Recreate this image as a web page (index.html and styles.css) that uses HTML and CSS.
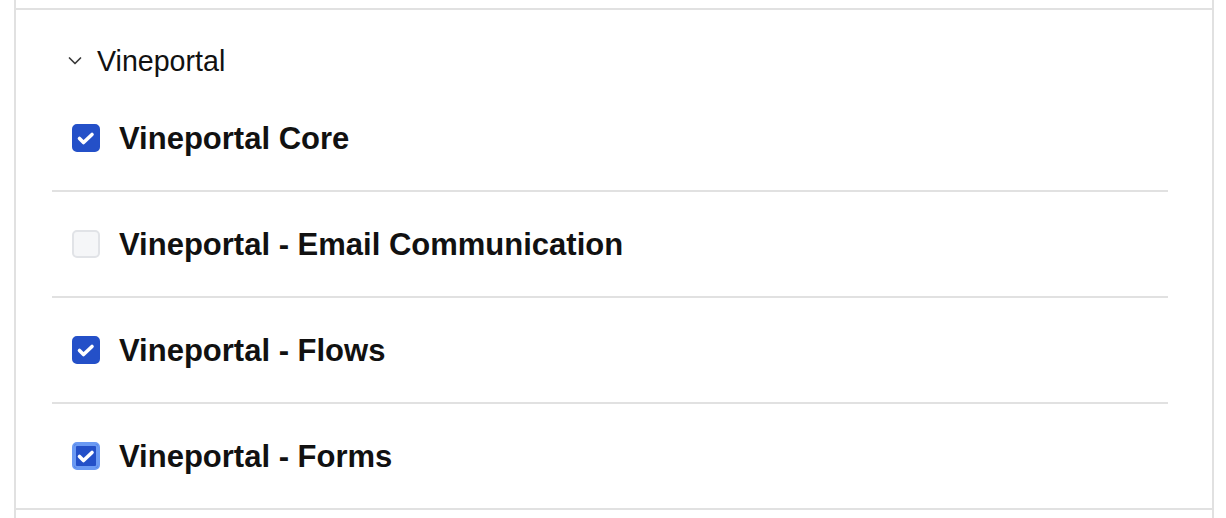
FILE: index.html
```html
<!DOCTYPE html>
<html lang="en">
<head>
    <meta charset="UTF-8">
    <meta name="viewport" content="width=device-width, initial-scale=1.0">
    <title>Modules</title>
    <link rel="stylesheet" href="styles.css">
</head>
<body>
    <div class="panel">
        <div class="section section-prev"></div>

        <!-- Vineportal group -->
        <div class="section">
            <div class="group-header">
                <svg class="chevron" width="14" height="10" viewBox="0 0 14 10">
                    <polyline points="1.5,2 7,7.5 12.5,2" fill="none" stroke="#3a3a3a" stroke-width="1.7" stroke-linecap="round" stroke-linejoin="round"/>
                </svg>
                <span>Vineportal</span>
            </div>
            <ul class="module-list">
                <li class="module">
                    <span class="checkbox checked">
                        <svg viewBox="0 0 28 28"><polyline points="7.5,14.5 11.5,18.5 20,10.5" fill="none" stroke="#fff" stroke-width="3.6" stroke-linecap="round" stroke-linejoin="round"/></svg>
                    </span>
                    <span class="module-name">Vineportal Core</span>
                </li>
                <li class="module">
                    <span class="checkbox"></span>
                    <span class="module-name">Vineportal - Email Communication</span>
                </li>
                <li class="module">
                    <span class="checkbox checked">
                        <svg viewBox="0 0 28 28"><polyline points="7.5,14.5 11.5,18.5 20,10.5" fill="none" stroke="#fff" stroke-width="3.6" stroke-linecap="round" stroke-linejoin="round"/></svg>
                    </span>
                    <span class="module-name">Vineportal - Flows</span>
                </li>
                <li class="module">
                    <span class="checkbox checked focused">
                        <svg viewBox="0 0 28 28"><polyline points="7.5,14.5 11.5,18.5 20,10.5" fill="none" stroke="#fff" stroke-width="3.6" stroke-linecap="round" stroke-linejoin="round"/></svg>
                    </span>
                    <span class="module-name">Vineportal - Forms</span>
                </li>
            </ul>
        </div>

        <div class="section section-next"></div>
    </div>
</body>
</html>
```

FILE: styles.css
```css
body {
    margin: 0;
    font-family: "Liberation Sans", Arial, sans-serif;
    background-color: #fff;
    color: #111;
}

.panel {
    width: 1196px;
    margin-left: 14px;
    border-left: 2px solid #e1e1e1;
    border-right: 2px solid #e1e1e1;
}

.section {
    border-bottom: 2px solid #e1e1e1;
    padding: 0 44px 0 36px;
}

.section-prev {
    height: 8px;
}

.section-next {
    height: 20px;
    border-bottom: none;
}

/* Group header */
.group-header {
    display: flex;
    align-items: center;
    height: 38px;
    padding: 32px 0 0 16px;
    margin-bottom: 6px;
    font-size: 28.6px;
    color: #111;
}

.chevron {
    margin-right: 15px;
}

/* Module rows */
.module-list {
    list-style-type: none;
    margin: 0;
    padding: 0;
}

.module {
    display: flex;
    align-items: center;
    height: 104px;
    padding-left: 20px;
    border-bottom: 2px solid #e1e1e1;
}

.module:last-child {
    border-bottom: none;
}

.checkbox {
    box-sizing: border-box;
    width: 28px;
    height: 28px;
    border-radius: 5px;
    background-color: #f5f6f8;
    border: 2px solid #e1e3e7;
    margin-right: 19px;
    flex-shrink: 0;
}

.checkbox svg {
    display: block;
    width: 28px;
    height: 28px;
    margin: -2px;
}

.checkbox.checked {
    background-color: #2450c8;
    border-color: #2450c8;
}

.checkbox.focused {
    box-shadow: inset 0 0 0 2px #6b9af3;
    border-color: #6b9af3;
}

.module-name {
    margin-top: 2px;
    font-size: 31px;
    font-weight: bold;
    color: #111;
}
```
